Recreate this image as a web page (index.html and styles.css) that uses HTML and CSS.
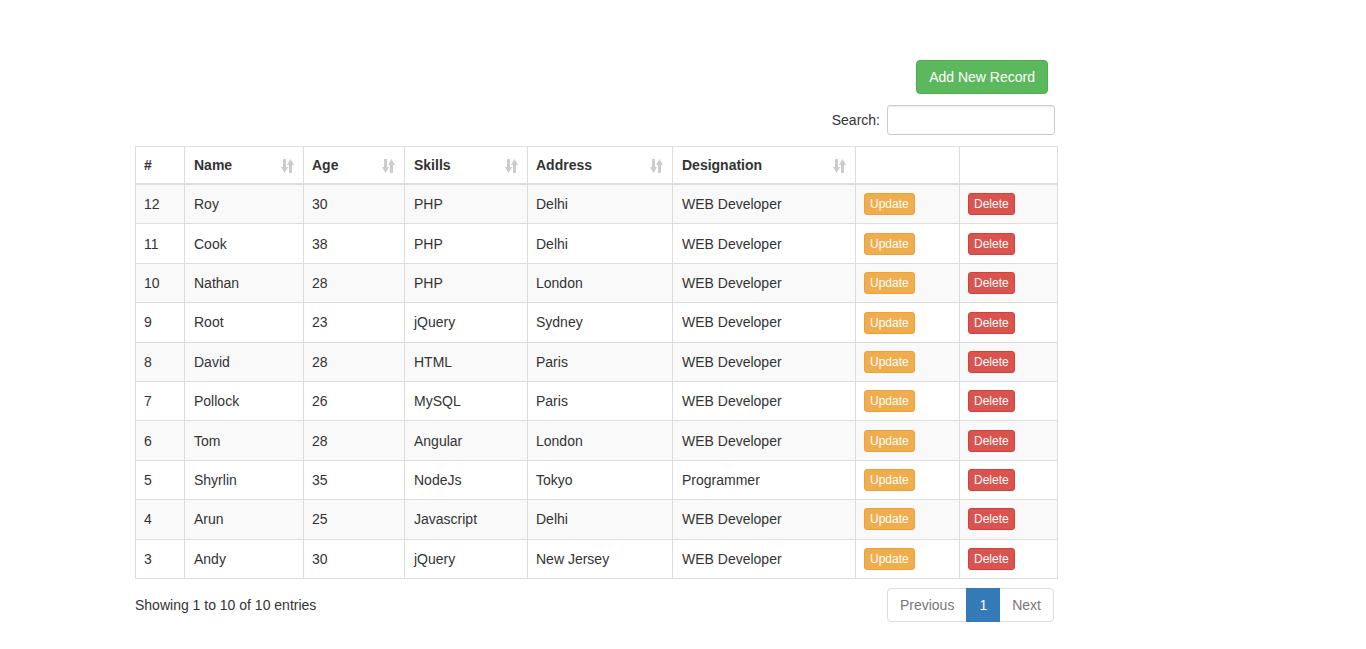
FILE: index.html
```html
<!DOCTYPE html>
<html lang="en">
<head>
<meta charset="utf-8">
<title>Records</title>
<link rel="stylesheet" href="styles.css">
</head>
<body>
<div class="wrap">
  <div class="toolbar">
    <button class="btn btn-success">Add New Record</button>
  </div>
  <div class="search-row">
    <label class="search-label">Search:<input class="search-input" type="search"></label>
  </div>
  <table class="grid">
    <colgroup>
      <col style="width:49px"><col style="width:119px"><col style="width:101px"><col style="width:123px"><col style="width:145px"><col style="width:183px"><col style="width:104px"><col style="width:98px">
    </colgroup>
    <thead>
      <tr>
        <th>#</th>
        <th class="sortable">Name<svg class="sort-ico" viewBox="0 0 13 14" width="13" height="14"><path d="M2 0h3v8h2l-3.5 6L0 8h2z"/><path d="M8 6h3v8H8z M6 6l3.5-6L13 6z"/></svg></th>
        <th class="sortable">Age<svg class="sort-ico" viewBox="0 0 13 14" width="13" height="14"><path d="M2 0h3v8h2l-3.5 6L0 8h2z"/><path d="M8 6h3v8H8z M6 6l3.5-6L13 6z"/></svg></th>
        <th class="sortable">Skills<svg class="sort-ico" viewBox="0 0 13 14" width="13" height="14"><path d="M2 0h3v8h2l-3.5 6L0 8h2z"/><path d="M8 6h3v8H8z M6 6l3.5-6L13 6z"/></svg></th>
        <th class="sortable">Address<svg class="sort-ico" viewBox="0 0 13 14" width="13" height="14"><path d="M2 0h3v8h2l-3.5 6L0 8h2z"/><path d="M8 6h3v8H8z M6 6l3.5-6L13 6z"/></svg></th>
        <th class="sortable">Designation<svg class="sort-ico" viewBox="0 0 13 14" width="13" height="14"><path d="M2 0h3v8h2l-3.5 6L0 8h2z"/><path d="M8 6h3v8H8z M6 6l3.5-6L13 6z"/></svg></th>
        <th></th>
        <th></th>
      </tr>
    </thead>
    <tbody>
      <tr><td>12</td><td>Roy</td><td>30</td><td>PHP</td><td>Delhi</td><td>WEB Developer</td><td><button class="btn-xs warn">Update</button></td><td><button class="btn-xs danger">Delete</button></td></tr>
      <tr><td>11</td><td>Cook</td><td>38</td><td>PHP</td><td>Delhi</td><td>WEB Developer</td><td><button class="btn-xs warn">Update</button></td><td><button class="btn-xs danger">Delete</button></td></tr>
      <tr><td>10</td><td>Nathan</td><td>28</td><td>PHP</td><td>London</td><td>WEB Developer</td><td><button class="btn-xs warn">Update</button></td><td><button class="btn-xs danger">Delete</button></td></tr>
      <tr><td>9</td><td>Root</td><td>23</td><td>jQuery</td><td>Sydney</td><td>WEB Developer</td><td><button class="btn-xs warn">Update</button></td><td><button class="btn-xs danger">Delete</button></td></tr>
      <tr><td>8</td><td>David</td><td>28</td><td>HTML</td><td>Paris</td><td>WEB Developer</td><td><button class="btn-xs warn">Update</button></td><td><button class="btn-xs danger">Delete</button></td></tr>
      <tr><td>7</td><td>Pollock</td><td>26</td><td>MySQL</td><td>Paris</td><td>WEB Developer</td><td><button class="btn-xs warn">Update</button></td><td><button class="btn-xs danger">Delete</button></td></tr>
      <tr><td>6</td><td>Tom</td><td>28</td><td>Angular</td><td>London</td><td>WEB Developer</td><td><button class="btn-xs warn">Update</button></td><td><button class="btn-xs danger">Delete</button></td></tr>
      <tr><td>5</td><td>Shyrlin</td><td>35</td><td>NodeJs</td><td>Tokyo</td><td>Programmer</td><td><button class="btn-xs warn">Update</button></td><td><button class="btn-xs danger">Delete</button></td></tr>
      <tr><td>4</td><td>Arun</td><td>25</td><td>Javascript</td><td>Delhi</td><td>WEB Developer</td><td><button class="btn-xs warn">Update</button></td><td><button class="btn-xs danger">Delete</button></td></tr>
      <tr><td>3</td><td>Andy</td><td>30</td><td>jQuery</td><td>New Jersey</td><td>WEB Developer</td><td><button class="btn-xs warn">Update</button></td><td><button class="btn-xs danger">Delete</button></td></tr>
    </tbody>
  </table>
  <div class="footer">
    <div class="info">Showing 1 to 10 of 10 entries</div>
    <ul class="pager">
      <li class="pg disabled">Previous</li>
      <li class="pg active">1</li>
      <li class="pg disabled">Next</li>
    </ul>
  </div>
</div>
<script src="scroll.js"></script>
</body>
</html>
```
FILE: scroll.js
```js
window.scrollTo(0, 49);
```
FILE: styles.css
```css
html { overflow-y: scroll; }
body {
  margin: 0;
  font-family: "Liberation Sans", Arial, Helvetica, sans-serif;
  font-size: 14px;
  line-height: 20px;
  color: #333;
  background: #fff;
}
.wrap {
  width: 920px;
  margin-left: 135px;
  padding-top: 109px;
  padding-bottom: 28px;
}
.toolbar {
  display: flex;
  justify-content: flex-end;
  padding-right: 7px;
}
.btn {
  font-family: inherit;
  font-size: 14px;
  line-height: 20px;
  padding: 6px 12px;
  border-radius: 4px;
  border: 1px solid transparent;
  cursor: pointer;
}
.btn-success {
  color: #fff;
  background: #5cb85c;
  border-color: #4cae4c;
}
.search-row {
  display: flex;
  justify-content: flex-end;
  margin-top: 11px;
}
.search-label {
  display: flex;
  align-items: center;
  font-weight: normal;
}
.search-input {
  width: 168px;
  height: 30px;
  box-sizing: border-box;
  margin-left: 7px;
  border: 1px solid #ccc;
  border-radius: 3px;
  padding: 5px 10px;
  font-family: inherit;
  font-size: 12px;
  box-shadow: inset 0 1px 1px rgba(0,0,0,.075);
}
.grid {
  margin-top: 11px;
  width: 923px;
  border-collapse: collapse;
  table-layout: fixed;
  border: 1px solid #ddd;
}
.grid th, .grid td {
  border: 1px solid #ddd;
  padding: 8px;
  text-align: left;
  vertical-align: middle;
}
.grid th:nth-child(2), .grid td:nth-child(2),
.grid th:nth-child(4), .grid td:nth-child(4),
.grid th:nth-child(6), .grid td:nth-child(6) { padding-left: 9px; }
.grid th {
  font-weight: bold;
  border-bottom: 2px solid #ddd;
  position: relative;
  line-height: 20px;
}
.grid td {
  height: 22.4px;
  line-height: 20px;
}
.grid tbody tr:nth-child(odd) td { background: #f9f9f9; }
.sort-ico {
  position: absolute;
  right: 9px;
  top: 12px;
  fill: #ccc;
}
.btn-xs {
  font-family: inherit;
  font-size: 12px;
  line-height: 18px;
  padding: 1px 5px;
  border-radius: 3px;
  border: 1px solid transparent;
  color: #fff;
  vertical-align: middle;
  cursor: pointer;
}
.warn { background: #f0ad4e; border-color: #eea236; }
.danger { background: #d9534f; border-color: #d43f3a; }
.footer {
  display: flex;
  justify-content: space-between;
  align-items: center;
  margin-top: 9px;
}
.info { padding-top: 1px; }
.pager {
  display: flex;
  list-style: none;
  margin: 0 1px 0 0;
  padding: 0;
}
.pg {
  padding: 6px 12px;
  line-height: 20px;
  border: 1px solid #ddd;
  margin-left: -1px;
  color: #777;
  background: #fff;
}
.pg:first-child { border-radius: 4px 0 0 4px; margin-left: 0; }
.pg:last-child { border-radius: 0 4px 4px 0; }
.pg.active {
  background: #337ab7;
  border-color: #337ab7;
  color: #fff;
  position: relative;
}
```
